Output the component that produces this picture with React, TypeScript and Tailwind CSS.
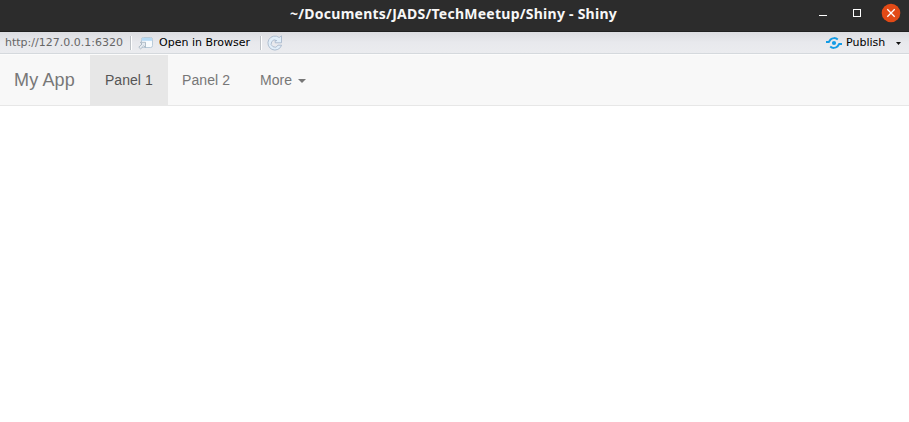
function TitleBar() {
  return (
    <header className="flex h-8 shrink-0 items-start border-b border-[#202020] bg-[#2c2c2c] text-white">
      <div className="w-[290px] shrink-0" />
      <h1 className="h-7 w-[327px] shrink-0 whitespace-nowrap font-['Noto_Sans',sans-serif] text-[14px] leading-7 font-bold tracking-[0.25px] text-[#f7f7f7]">
        ~/Documents/JADS/TechMeetup/Shiny - Shiny
      </h1>
      <svg className="ml-[193px] h-7 w-[99px] shrink-0" viewBox="0 0 99 28" fill="none">
        <path d="M9 15.5h8" stroke="#fff" />
        <rect x="43.5" y="9.5" width="7" height="7" stroke="#fff" />
        <circle cx="81" cy="13" r="9.3" fill="#e24a16" />
        <path d="m77.3 9.3 7.4 7.4m0-7.4-7.4 7.4" stroke="#fff" strokeWidth="1.3" />
      </svg>
    </header>
  );
}

function Separator() {
  return <span className="h-[14px] w-[2px] shrink-0 border-r border-white bg-[#bfc3c8]" />;
}

function OpenIcon() {
  return (
    <svg className="h-[14px] w-4" viewBox="0 0 16 14" fill="none">
      <rect x="3.5" y="1.5" width="11" height="10" rx="1.8" fill="#f8fbfd" stroke="#b9cbd9" />
      <path d="M4 2h10v2.8H4z" fill="#b5daf5" />
      <path d="M.8 11.2 4 8 2.3 6.3h5.2v5.2L5.8 9.8l-3.2 3.1Z" fill="#e4eaf0" stroke="#a2b0bc" strokeWidth=".8" />
    </svg>
  );
}

function RefreshIcon() {
  return (
    <svg className="h-4 w-4" viewBox="0 0 16 16" fill="none">
      <path
        d="M12.2 2.5 14.5.8v7H8.2V5.6h1.6A3.6 3.6 0 1 0 11 10.2h3.6A7 7 0 1 1 12.2 2.5Z"
        fill="#e1eef9"
        stroke="#a9b9cc"
        strokeWidth=".9"
        strokeLinejoin="round"
      />
    </svg>
  );
}

function PublishIcon() {
  return (
    <svg className="h-3 w-4" viewBox="0 0 16 12" fill="none" stroke="#139be5">
      <circle cx="8" cy="6" r="2.1" fill="#139be5" stroke="none" />
      <path d="M0 5h2.8L4.6 2.4C6.4.8 9.6.6 11.8 2.4M16 7h-2.8l-1.8 2.6C9.6 11.2 6.4 11.4 4.2 9.6" strokeWidth="2" />
    </svg>
  );
}

function Toolbar() {
  return (
    <div className="flex h-[22px] shrink-0 items-center border-b border-[#d5d9dd] bg-linear-to-b from-[#dcdde1] via-[#e8e9ed] to-[#ebecef] font-['DejaVu_Sans',sans-serif] text-[11px] leading-[21px] text-black">
      <span className="ml-[5px] w-[125px] shrink-0 whitespace-nowrap text-[#666]">http://127.0.0.1:6320</span>
      <Separator />
      <button className="ml-[6px] flex w-[122px] shrink-0 items-center gap-[5px] whitespace-nowrap">
        <OpenIcon />
        Open in Browser
      </button>
      <Separator />
      <button className="ml-[5px]" aria-label="Refresh">
        <RefreshIcon />
      </button>
      <button className="mr-[8px] ml-auto flex items-center whitespace-nowrap">
        <PublishIcon />
        <span className="ml-1 w-[50px] text-left">Publish</span>
        <svg className="mt-[2px] h-[3px] w-[5px]" viewBox="0 0 5 3">
          <path d="M0 0h5L2.5 3Z" fill="#111" />
        </svg>
      </button>
    </div>
  );
}

function AppNav() {
  return (
    <nav className="flex h-[52px] shrink-0 border-t border-b border-t-[#fcfcfc] border-b-[#e7e7e7] bg-[#f8f8f8] font-['Liberation_Sans',Arial,sans-serif] text-sm leading-[51px] tracking-[0.03px] text-[#777]">
      <a className="w-[90px] pl-[14px] text-lg leading-[50px] tracking-[0.15px]">My App</a>
      <a className="w-[78px] bg-[#e7e7e7] pl-[15px] text-[#555]">Panel 1</a>
      <a className="w-[77px] pl-[14px] tracking-[0.1px]">Panel 2</a>
      <a className="flex items-center pl-[15px]">
        More
        <svg className="mt-[2px] ml-[6px] h-1 w-2" viewBox="0 0 8 4">
          <path d="M0 0h8L4 4Z" fill="#777" />
        </svg>
      </a>
    </nav>
  );
}

export default function App() {
  return (
    <div className="flex h-screen w-full flex-col overflow-hidden bg-white">
      <TitleBar />
      <Toolbar />
      <AppNav />
      <main className="flex-1 bg-white" />
    </div>
  );
}
